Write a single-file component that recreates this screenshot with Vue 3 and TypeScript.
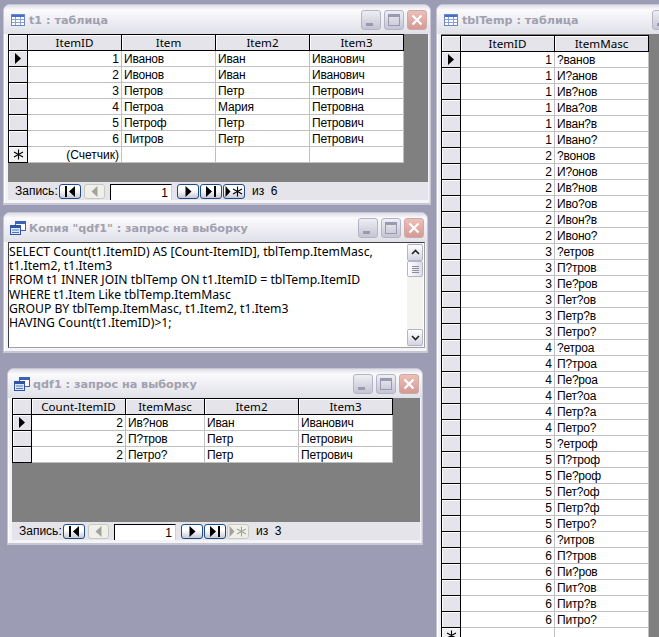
<template>
  <div class="desktop">
    <section
      v-for="win in windows"
      :key="win.title"
      class="win"
      :style="{ left: win.x + 'px', top: win.y + 'px', width: win.w + 'px', height: win.h + 'px' }"
    >
      <header class="titlebar">
        <svg v-if="win.icon === 'table'" class="ticon" width="16" height="16" viewBox="0 0 16 16">
          <rect x="1.5" y="2.5" width="13" height="11" fill="#fff" stroke="#6f86c4" />
          <rect x="2" y="3" width="12" height="2" fill="#3f6fd0" />
          <path d="M2 7.5h12M2 10.5h12M5.5 5v8M10.5 5v8" stroke="#8aa0d8" />
        </svg>
        <svg v-else class="ticon" width="16" height="16" viewBox="0 0 16 16">
          <rect x="5.5" y="1.5" width="10" height="9" fill="#fff" stroke="#3a62b8" />
          <rect x="6" y="2" width="9" height="2" fill="#3a62b8" />
          <rect x="0.5" y="5.5" width="10" height="9" fill="#dfe8fa" stroke="#2f55a8" />
          <rect x="1" y="6" width="9" height="2" fill="#2f55a8" />
          <path d="M2 10h7M2 12.5h7" stroke="#4c74c8" />
        </svg>
        <span class="ttext">{{ win.title }}</span>
        <div class="tbtns">
          <button class="tbtn"><i class="min"></i></button>
          <button class="tbtn"><i class="max"></i></button>
          <button class="tbtn close">
            <svg width="14" height="14" viewBox="0 0 14 14"><path d="M2.5 2.5l9 9M11.5 2.5l-9 9" stroke="#fff" stroke-width="2.2" /></svg>
          </button>
        </div>
      </header>

      <div v-if="win.sql" class="sqlbox">
        <pre class="sql">{{ win.sql }}</pre>
        <div class="scroll">
          <button class="sbtn">
            <svg width="9" height="7" viewBox="0 0 9 7"><path d="M1 5l3.5-3.5L8 5" fill="none" stroke="#222" stroke-width="1.6" /></svg>
          </button>
          <div class="thumb"><i></i><i></i><i></i><i></i></div>
          <div class="track"></div>
          <button class="sbtn">
            <svg width="9" height="7" viewBox="0 0 9 7"><path d="M1 2l3.5 3.5L8 2" fill="none" stroke="#222" stroke-width="1.6" /></svg>
          </button>
        </div>
      </div>

      <template v-else>
        <div class="sheet" :style="{ paddingTop: win.gridTop + 'px' }">
          <div class="grid" :style="{ gridTemplateColumns: '19px ' + win.cols.map(c => c + 'px').join(' ') }">
            <div class="hcell sel"></div>
            <div v-for="col in win.columns" :key="col" class="hcell">{{ col }}</div>
            <template v-for="(row, i) in win.rows" :key="i">
              <div class="rsel">
                <svg v-if="i === 0" width="8" height="11" viewBox="0 0 8 11"><path d="M1 0v11l6-5.500z" fill="#000" /></svg>
              </div>
              <div
                v-for="(val, j) in row"
                :key="j"
                class="cell"
                :class="{ num: j === 0 }"
              >{{ val }}</div>
            </template>
            <template v-if="win.newRow">
              <div class="rsel star">
                <svg width="11" height="11" viewBox="0 0 11 11"><path d="M5.500 0.500v10M1 3l9 5M10 3l-9 5" stroke="#000" stroke-width="1.100" /></svg>
              </div>
              <div
                v-for="(col, j) in win.columns"
                :key="col"
                class="cell"
                :class="{ num: j === 0 }"
              >{{ j === 0 ? win.newRow : '' }}</div>
            </template>
          </div>
        </div>

        <footer v-if="win.total" class="nav">
          <span class="navlabel">Запись:</span>
          <button class="nbtn first">
            <svg width="12" height="11" viewBox="0 0 12 11"><path d="M1 0h2v11H1zM11 0v11L5 5.500z" fill="#000" /></svg>
          </button>
          <button class="nbtn off prev">
            <svg width="7" height="11" viewBox="0 0 7 11"><path d="M6.500 0v11L0.500 5.500z" fill="#a3a39a" /></svg>
          </button>
          <div class="navinput">1</div>
          <button class="nbtn next">
            <svg width="7" height="11" viewBox="0 0 7 11"><path d="M0.500 0v11l6-5.500z" fill="#000" /></svg>
          </button>
          <button class="nbtn last">
            <svg width="12" height="11" viewBox="0 0 12 11"><path d="M1 0v11l6-5.500zM9 0h2v11H9z" fill="#000" /></svg>
          </button>
          <button class="nbtn newrec" :class="{ off: win.newOff }">
            <svg width="18" height="11" viewBox="0 0 18 11">
              <path d="M0.500 0v11l5-5.500z" :fill="win.newOff ? '#a3a39a' : '#000'" />
              <path d="M12.500 0.500v10M8 3l9 5M17 3l-9 5" :stroke="win.newOff ? '#a3a39a' : '#000'" stroke-width="1.100" />
            </svg>
          </button>
          <span class="navtotal">из&nbsp; {{ win.total }}</span>
        </footer>
      </template>
    </section>
  </div>
</template>

<script setup lang="ts">
interface Win {
  title: string
  icon: 'table' | 'query'
  x: number
  y: number
  w: number
  h: number
  gridTop: number
  cols: number[]
  columns: string[]
  rows: (string | number)[][]
  newRow?: string
  total?: number
  newOff?: boolean
  sql?: string
}

const names = ['Иванов', 'Ивонов', 'Петров', 'Петроа', 'Петроф', 'Питров']

// every letter of every surname replaced by ? in turn
const maskRows: (string | number)[][] = []
names.forEach((name, id) => {
  for (let i = 0; i < name.length; i++) {
    maskRows.push([id + 1, name.slice(0, i) + '?' + name.slice(i + 1)])
  }
})

const sql = `SELECT Count(t1.ItemID) AS [Count-ItemID], tblTemp.ItemMasc,
t1.Item2, t1.Item3
FROM t1 INNER JOIN tblTemp ON t1.ItemID = tblTemp.ItemID
WHERE t1.Item Like tblTemp.ItemMasc
GROUP BY tblTemp.ItemMasc, t1.Item2, t1.Item3
HAVING Count(t1.ItemID)>1;`

const windows: Win[] = [
  {
    title: 't1 : таблица',
    icon: 'table',
    x: 3,
    y: 4,
    w: 428,
    h: 201,
    gridTop: 0,
    cols: [94, 94, 94, 94],
    columns: ['ItemID', 'Item', 'Item2', 'Item3'],
    rows: [
      [1, 'Иванов', 'Иван', 'Иванович'],
      [2, 'Ивонов', 'Иван', 'Иванович'],
      [3, 'Петров', 'Петр', 'Петрович'],
      [4, 'Петроа', 'Мария', 'Петровна'],
      [5, 'Петроф', 'Петр', 'Петрович'],
      [6, 'Питров', 'Петр', 'Петрович'],
    ],
    newRow: '(Счетчик)',
    total: 6,
  },
  {
    title: 'Копия "qdf1" : запрос на выборку',
    icon: 'query',
    x: 3,
    y: 212,
    w: 425,
    h: 141,
    gridTop: 0,
    cols: [],
    columns: [],
    rows: [],
    sql,
  },
  {
    title: 'qdf1 : запрос на выборку',
    icon: 'query',
    x: 7,
    y: 368,
    w: 416,
    h: 177,
    gridTop: 0,
    cols: [94, 79, 94, 94],
    columns: ['Count-ItemID', 'ItemMasc', 'Item2', 'Item3'],
    rows: [
      [2, 'Ив?нов', 'Иван', 'Иванович'],
      [2, 'П?тров', 'Петр', 'Петрович'],
      [2, 'Петро?', 'Петр', 'Петрович'],
    ],
    total: 3,
    newOff: true,
  },
  {
    title: 'tblTemp : таблица',
    icon: 'table',
    x: 436,
    y: 4,
    w: 286,
    h: 640,
    gridTop: 1,
    cols: [94, 94],
    columns: ['ItemID', 'ItemMasc'],
    rows: maskRows,
    newRow: ' ',
  },
]
</script>

<style scoped>
.desktop {
  position: relative;
  width: 659px;
  height: 637px;
  overflow: hidden;
  background: #9c9cb4;
  font-family: "Liberation Sans", sans-serif;
  font-size: 12px;
  color: #000;
}

.win {
  position: absolute;
  box-sizing: border-box;
  display: flex;
  flex-direction: column;
  padding: 0 2px 3px 4px;
  background: #f4f4f6;
  border: 1px solid #c6c6d4;
  border-bottom-width: 2px;
  border-radius: 7px 7px 0 0;
  box-shadow: inset 1px 0 0 #fff, inset -1px 0 0 #e2e2e6;
}

.titlebar {
  flex: none;
  display: flex;
  align-items: center;
  height: 29px;
  margin: 0 -2px 0 -4px;
  padding: 0 3px 0 6px;
  border-radius: 6px 6px 0 0;
  background: linear-gradient(#dcdce6 0, #fbfbfd 5px, #f0f0f5 14px, #e0e0e8 100%);
}

.ticon {
  flex: none;
  margin-right: 3px;
}

.ttext {
  padding-top: 1px;
  font-family: "DejaVu Sans", sans-serif;
  font-weight: 700;
  font-size: 11.2px;
  color: #a0a0ae;
  white-space: nowrap;
}

.tbtns {
  margin-left: auto;
  display: flex;
  gap: 3px;
}

.tbtn {
  width: 20px;
  height: 20px;
  padding: 0;
  display: flex;
  align-items: center;
  justify-content: center;
  position: relative;
  border: 1px solid #b4b4c6;
  border-radius: 3px;
  background: linear-gradient(#eeeef4, #c4c4d4);
}

.tbtn.close {
  border-color: #d0a8a8;
  background: linear-gradient(#ecc0b8, #d49a94);
}

.min {
  position: absolute;
  left: 4px;
  bottom: 3px;
  width: 7px;
  height: 3px;
  background: #9a9aae;
}

.max {
  width: 12px;
  height: 12px;
  box-sizing: border-box;
  border: 1px solid #9a9aae;
  border-top-width: 3px;
}

.sheet {
  flex: 1;
  min-height: 0;
  overflow: hidden;
  background: #808080;
}

.grid {
  display: inline-grid;
  vertical-align: top;
  border-top: 1px solid #000;
  border-left: 1px solid #000;
  grid-auto-rows: 16px;
  background: #fff;
}

.hcell {
  box-sizing: border-box;
  display: flex;
  align-items: center;
  justify-content: center;
  font-family: "Noto Sans", sans-serif;
  font-size: 11.6px;
  background: #e4e4ea;
  border-right: 1px solid #000;
  border-bottom: 1px solid #000;
  box-shadow: inset 1px 1px 0 #fff;
  white-space: nowrap;
  overflow: hidden;
}

.rsel {
  box-sizing: border-box;
  display: flex;
  align-items: center;
  justify-content: center;
  background: #e4e4ea;
  border-right: 1px solid #000;
  border-bottom: 1px solid #000;
  box-shadow: inset 1px 1px 0 #fff;
}

.rsel.star {
  background: #f1f1f4;
}

.cell {
  box-sizing: border-box;
  padding: 0 2px;
  line-height: 17px;
  background: #fff;
  border-right: 1px solid #c0c0c0;
  border-bottom: 1px solid #c0c0c0;
  white-space: nowrap;
  overflow: hidden;
  letter-spacing: -0.2px;
}

.cell.num {
  text-align: right;
  letter-spacing: 0;
}

.nav {
  flex: none;
  display: flex;
  align-items: flex-start;
  height: 18px;
  background: #e4e4ea;
  box-sizing: border-box;
  padding-top: 2px;
}

.navlabel {
  flex: none;
  margin-left: 7px;
  width: 44px;
  line-height: 15px;
  white-space: nowrap;
}

.nbtn {
  flex: none;
  box-sizing: border-box;
  width: 22px;
  height: 15px;
  margin-right: 1px;
  padding: 0;
  display: flex;
  align-items: center;
  justify-content: center;
  border: 1px solid #1f4c80;
  border-radius: 3px;
  background: linear-gradient(#fff 40%, #c8c8d8);
}

.nbtn.off {
  border-color: #c9c9c0;
  background: #f0f0ea;
}

.prev {
  margin-left: 2px;
  margin-right: 5px;
  width: 21px;
}

.navinput {
  flex: none;
  box-sizing: border-box;
  width: 62px;
  height: 16px;
  margin-right: 5px;
  padding-right: 3px;
  text-align: right;
  line-height: 16px;
  background: #fff;
  border-top: 1px solid #000;
  border-left: 1px solid #000;
  border-right: 1px solid #d4d0c8;
}

.navtotal {
  margin-left: 6px;
  line-height: 15px;
  white-space: nowrap;
}

.sqlbox {
  flex: 1;
  min-height: 0;
  display: flex;
  box-sizing: border-box;
  background: #fff;
  border-top: 1px solid #404040;
  border-left: 1px solid #404040;
  border-bottom: 1px solid #a0a0a0;
  border-right: 1px solid #a0a0a0;
}

.sql {
  flex: 1;
  margin: 0;
  padding: 2px 0 0 0;
  font-family: "Noto Sans", sans-serif;
  font-size: 12.2px;
  line-height: 14.2px;
  white-space: pre;
  overflow: hidden;
}

.scroll {
  flex: none;
  width: 16px;
  display: flex;
  flex-direction: column;
  padding: 1px 0;
  margin-right: 1px;
  background: #f3f3f0;
}

.sbtn {
  flex: none;
  width: 16px;
  height: 17px;
  padding: 0;
  display: flex;
  align-items: center;
  justify-content: center;
  border: 1px solid #b4b4c8;
  border-radius: 2px;
  background: linear-gradient(#fff, #d4d4e2);
}

.thumb {
  flex: none;
  box-sizing: border-box;
  height: 16px;
  display: flex;
  flex-direction: column;
  align-items: center;
  justify-content: center;
  gap: 1px;
  border: 1px solid #b4b4c8;
  border-radius: 2px;
  background: linear-gradient(90deg, #fff, #dcdce8);
}

.thumb i {
  width: 7px;
  height: 1px;
  background: #8c8ca0;
}

.track {
  flex: 1;
}
</style>

<style>
html,
body {
  background: #9c9cb4;
}
</style>
